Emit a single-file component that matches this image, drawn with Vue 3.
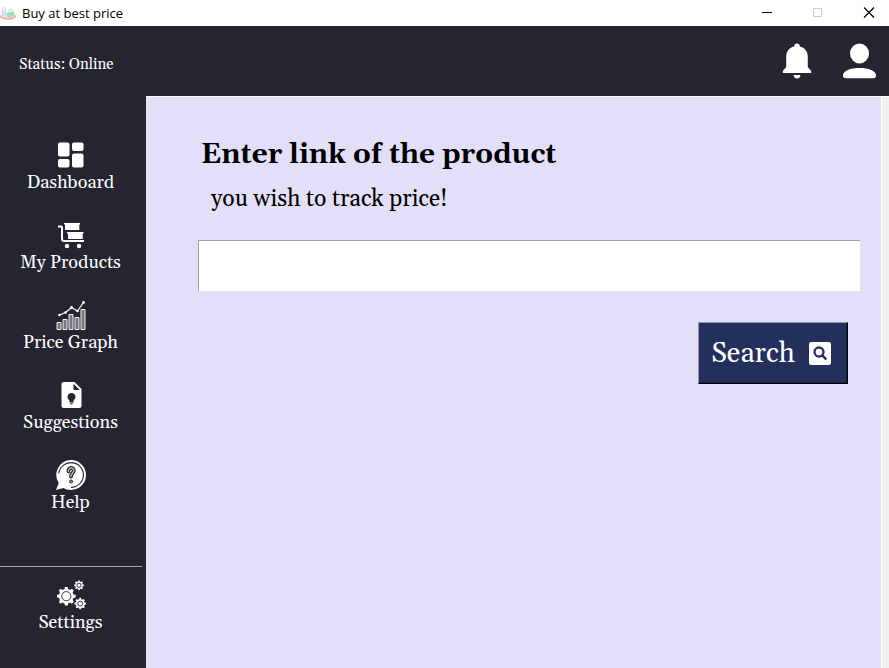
<script setup>
import { ref } from 'vue'

const link = ref('')

// Outline of a toothed wheel around (cx, cy).
function gear(cx, cy, outer, inner, teeth) {
  const points = []
  const step = (Math.PI * 2) / teeth
  for (let i = 0; i < teeth; i++) {
    const a = i * step - Math.PI / 2
    for (const [offset, r] of [[-0.3, inner], [-0.19, outer], [0.19, outer], [0.3, inner]]) {
      const t = a + offset * step
      points.push(`${(cx + r * Math.cos(t)).toFixed(2)} ${(cy + r * Math.sin(t)).toFixed(2)}`)
    }
  }
  return `M${points.join('L')}Z`
}

const gears = [
  { cx: 10.3, cy: 16.2, outer: 9.4, inner: 7.4, ring: 4.6 },
  { cx: 23, cy: 5.3, outer: 4.9, inner: 3.8, ring: 2.1 },
  { cx: 24.2, cy: 23.6, outer: 5.8, inner: 4.5, ring: 2.4 },
]
</script>

<template>
  <div class="window">
    <header class="titlebar">
      <svg class="app-icon" viewBox="0 0 16 16" aria-hidden="true">
        <ellipse cx="8" cy="11.5" rx="8" ry="3.2" fill="#f4a3a0" />
        <ellipse cx="8" cy="10.7" rx="7" ry="2.5" fill="#f8dcdc" />
        <path d="M1.5 5.5L6 5l.8 6-4.8.4z" fill="#dcdcf0" />
        <path d="M2.5 6C2 .8 5.500.5 5.400 5.500" fill="none" stroke="#d4d4e6" />
        <path d="M6.500 8l7-1.800L15 11l-7 1.500z" fill="#9be0b4" />
        <path d="M8 8c.5-4.500 4.500-4.500 4.800-1" fill="none" stroke="#b4dcc4" />
      </svg>
      <span class="app-name">Buy at best price</span>
      <div class="window-controls">
        <button type="button" aria-label="Minimize">
          <svg viewBox="0 0 12 12"><path d="M1 5.500h10" stroke="#000" /></svg>
        </button>
        <button type="button" aria-label="Maximize" disabled>
          <svg viewBox="0 0 12 12"><path d="M1.500 1.500h8v8h-8z" fill="none" stroke="#ccc" /></svg>
        </button>
        <button type="button" aria-label="Close">
          <svg viewBox="0 0 12 12"><path d="M1 .5l10 10M11 .5l-10 10" stroke="#000" stroke-width="1.200" /></svg>
        </button>
      </div>
    </header>

    <div class="topbar">
      <span class="status">Status: Online</span>
      <div class="account">
        <button type="button" aria-label="Notifications">
          <svg class="bell" viewBox="0 0 30 36">
            <path d="M15 .5c-1.800 0-2.800 1.200-2.900 3C7.300 4.600 4.200 8.500 4.200 13.500V24L.8 28v2h28.400v-2l-3.400-4V13.500c0-5-3.100-8.900-7.900-10-.1-1.800-1.100-3-2.900-3zM11.500 32h7c-.3 2.300-1.700 3.600-3.500 3.600S11.800 34.300 11.500 32z" />
          </svg>
        </button>
        <button type="button" aria-label="Account">
          <svg class="person" viewBox="0 0 34 36">
            <ellipse cx="16.500" cy="10.500" rx="9.500" ry="10" />
            <path d="M0 32.500C0 27.500 7.500 25 16.500 25s16.500 2.500 16.500 7.500c0 1.900-1 2.700-2.500 2.700h-28c-1.500 0-2.500-.8-2.500-2.700z" />
          </svg>
        </button>
      </div>
    </div>

    <div class="body">
      <nav class="sidebar">
        <div class="nav-group">
          <a class="nav-item" href="#dashboard">
            <svg viewBox="0 0 30 30">
              <rect x="2" y="2.500" width="11.500" height="14" rx="2" />
              <rect x="16" y="2.500" width="11.500" height="8.500" rx="2" />
              <rect x="2" y="19" width="11.500" height="8.500" rx="2" />
              <rect x="16" y="13.500" width="11.500" height="14" rx="2" />
            </svg>
            Dashboard
          </a>
          <a class="nav-item" href="#products">
            <svg viewBox="0 0 30 30">
              <path d="M2 6.500h3q1 0 1 1V19q0 2 2 2h20" fill="none" stroke="#fff" stroke-width="2" />
              <path d="M8 3h16v1.500h-.7V10H9V4.500H8zM11 12h16.500v1.500h-.8V19H12v-5.500h-1z" />
              <circle cx="11" cy="26" r="2.200" /><circle cx="23" cy="26" r="2.200" />
            </svg>
            My Products
          </a>
          <a class="nav-item" href="#graph">
            <svg viewBox="0 0 30 30">
              <g fill="#77767c" stroke="#f0f0f0">
                <path d="M1 22.500h4v7h-4zM7 19.500h4v10h-4zM13 14.500h4v15h-4zM19 17.500h4v12h-4zM25 9.500h4v20h-4z" />
              </g>
              <path d="M3.500 15l6-2.500 6-5 6 3.500 6-8.500" fill="none" stroke="#fff" stroke-width="1.200" />
              <g><circle cx="3.500" cy="15" r="1.300" /><circle cx="9.500" cy="12.500" r="1.300" /><circle cx="15.500" cy="7.500" r="1.400" /><circle cx="21.500" cy="11" r="1.300" /><circle cx="27.500" cy="2.500" r="1.400" /></g>
            </svg>
            Price Graph
          </a>
          <a class="nav-item" href="#suggestions">
            <svg viewBox="0 0 30 30">
              <path d="M7.500 2h11l7 7v17q0 2-2 2h-16q-2 0-2-2V4q0-2 2-2z" />
              <g class="cut">
                <path d="M17.500 3.800V10h6.200zM13.500 21v1.500h4V21zM14.200 23.200h2.600v1h-2.600z" />
                <path d="M15.500 13a4 4 0 0 1 2.200 7.300v.7h-4.400v-.7A4 4 0 0 1 15.500 13z" />
              </g>
            </svg>
            Suggestions
          </a>
          <a class="nav-item" href="#help">
            <svg viewBox="0 0 30 30">
              <path d="M15 0a15 15 0 1 1 0 30c-3 0-5.500-1-7.500-2L0 30l2.700-7A15 15 0 0 1 15 0z" />
              <path d="M2.700 13.500A12.400 12.400 0 1 1 15 27.400" fill="none" stroke="#252531" stroke-width="1.100" />
              <path d="M12.500 11.300c-.6-4.300 5.700-4.300 5.300-.5-.2 2.200-2.800 2.300-2.800 5.700" fill="none" stroke="#252531" stroke-width="3.800" stroke-linecap="round" />
              <path d="M12.500 11.300c-.6-4.300 5.700-4.300 5.300-.5-.2 2.200-2.800 2.300-2.800 5.700" fill="none" stroke="#bbb" stroke-width="1.400" stroke-linecap="round" />
              <circle cx="15" cy="21.500" r="1.500" fill="#999" stroke="#252531" />
            </svg>
            Help
          </a>
        </div>
        <div class="nav-group settings">
          <a class="nav-item" href="#settings">
            <svg viewBox="0 0 30 30">
              <g v-for="g in gears" :key="g.cx">
                <path :d="gear(g.cx, g.cy, g.outer, g.inner, 8)" />
                <circle :cx="g.cx" :cy="g.cy" :r="g.ring" fill="none" stroke="#252531" stroke-width="0.900" />
              </g>
            </svg>
            Settings
          </a>
        </div>
      </nav>

      <main class="content">
        <form class="tracker" @submit.prevent>
          <label for="product-link">
            <strong>Enter link of the product</strong>
            <span>you wish to track price!</span>
          </label>
          <input id="product-link" v-model="link" type="text" />
          <button class="search" type="submit">
            Search
            <svg viewBox="0 1 24 24" aria-hidden="true">
              <rect x="1" y="1" width="22" height="23" rx="2.500" />
              <circle cx="11" cy="11" r="4.500" fill="none" stroke="#23305c" stroke-width="2.300" />
              <path d="M14.300 14.300l4 4.200" stroke="#23305c" stroke-width="2.500" />
            </svg>
          </button>
        </form>
      </main>
    </div>
  </div>
</template>

<style>
body {
  margin: 0;
}
</style>

<style scoped>
.window {
  display: flex;
  flex-direction: column;
  min-height: 100vh;
  background: #252531;
  color: #fff;
  font-family: Gelasio, Georgia, "Liberation Serif", serif;
}

svg {
  display: block;
  fill: #fff;
}

button {
  font: inherit;
  color: inherit;
}

.titlebar {
  display: flex;
  align-items: center;
  height: 26px;
  background: #fff;
  color: #000;
  font-family: "Open Sans", sans-serif;
  font-size: 13px;
  line-height: 18px;
}

.app-icon {
  width: 16px;
  height: 16px;
  margin-right: 6px;
}

.window-controls {
  display: flex;
  gap: 10px;
  margin-left: auto;
}

.window-controls button {
  display: grid;
  place-items: center;
  width: 41px;
  height: 24px;
  padding: 0;
  border: 0;
  background: none;
}

.window-controls svg {
  width: 12px;
  height: 12px;
}

.topbar {
  display: flex;
  align-items: center;
  justify-content: space-between;
  height: 70px;
  padding: 0 12px 0 19px;
}

.status {
  padding-top: 8px;
  font-size: 15px;
  line-height: 20px;
}

.account {
  display: flex;
  align-items: center;
  gap: 31px;
}

.account button {
  padding: 0;
  border: 0;
  background: none;
}

.bell {
  width: 30px;
  height: 36px;
}

.person {
  width: 34px;
  height: 36px;
}

.body {
  display: flex;
  flex: 1;
}

.sidebar {
  flex: none;
  width: 142px;
  padding: 44px 4px 0 0;
}

.nav-group {
  display: flex;
  flex-direction: column;
  gap: 24px;
}

.settings {
  margin-top: 50px;
  padding-top: 13px;
  border-top: 1px solid #a3a3a8;
}

.nav-item {
  display: flex;
  flex-direction: column;
  align-items: center;
  padding-right: 1px;
  color: #fff;
  font-size: 18px;
  line-height: 26px;
  text-decoration: none;
}

.nav-item svg {
  width: 30px;
  height: 30px;
}

.cut {
  fill: #252531;
}

.content {
  flex: 1;
  padding: 38px 20px 24px 52px;
  border-top: 1px solid #f8f8fc;
  border-right: 1px solid #fff;
  background: #e3dff8;
  box-shadow: inset 1px 0 #e8e6f2;
}

.body::after {
  content: "";
  width: 7px;
  background: #f0f0f0;
  border-top: 1px solid #fff;
}

.tracker {
  display: flex;
  flex-direction: column;
}

.tracker label {
  display: flex;
  flex-direction: column;
  padding-left: 3px;
  color: #000;
}

.tracker strong {
  font-size: 28px;
  line-height: 40px;
}

.tracker span {
  padding-left: 10px;
  margin-top: 9px;
  font-size: 23px;
  line-height: 32px;
}

.tracker input {
  height: 52px;
  margin-top: 24px;
  padding: 0 12px;
  box-sizing: border-box;
  border: 1px solid;
  border-color: #a0a0a0 #e6e4ee #e6e4ee #a0a0a0;
  background: #fff;
  font: inherit;
  font-size: 23px;
  outline: none;
}

.search {
  display: flex;
  align-items: center;
  align-self: flex-end;
  gap: 13px;
  height: 62px;
  margin: 30px 13px 0 0;
  padding: 2px 15px 0 12px;
  border: 1px solid;
  border-color: #9298ae #000 #000 #9298ae;
  box-shadow: inset -1px -1px #171f3c;
  background: #23305c;
  font-size: 28px;
}

.search svg {
  width: 24px;
  height: 24px;
}
</style>
